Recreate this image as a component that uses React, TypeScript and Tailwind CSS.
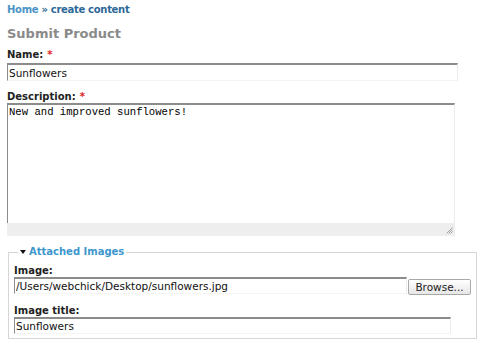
import { useState } from "react";

const inputCls =
  "block h-[17px] bg-white border-t-2 border-l border-r border-b border-t-[#8c8c8c] border-l-[#8c8c8c] border-r-[#ececec] border-b-[#f4f4f4] px-[1px] text-[10.5px] leading-[13px] text-[#111] outline-none font-['DejaVu_Sans',sans-serif]";

function Label({ text, required }: { text: string; required?: boolean }) {
  return (
    <div className="text-[10px] leading-[12px] font-bold text-[#222]">
      {text}
      {required && <span className="text-[#d22] ml-[4px]">*</span>}
    </div>
  );
}

export default function App() {
  const [name, setName] = useState("Sunflowers");
  const [desc, setDesc] = useState("New and improved sunflowers!");
  const [title, setTitle] = useState("Sunflowers");

  return (
    <div className="w-[480px] h-[343px] overflow-hidden bg-white pl-[7px] pt-[3px] font-['DejaVu_Sans',sans-serif]">
      <div className="text-[10px] leading-[14px] font-bold tracking-[-0.3px]">
        <a href="#" className="text-[#4b93c6]">
          Home
        </a>
        <span className="text-[#2c6898]"> » </span>
        <a href="#" className="text-[#2c6898]">
          create content
        </a>
      </div>

      <h2 className="mt-[9px] text-[13px] leading-[16px] font-bold text-[#8a8a8a]">
        Submit Product
      </h2>

      <div className="mt-[7px]">
        <Label text="Name:" required />
      </div>
      <input
        value={name}
        onChange={(e) => setName(e.target.value)}
        className={`${inputCls} mt-[2px] w-[451px] h-[18px]`}
      />

      <div className="mt-[10px]">
        <Label text="Description:" required />
      </div>
      <div className="w-[448px]">
        <textarea
          value={desc}
          onChange={(e) => setDesc(e.target.value)}
          className="block w-full h-[120px] resize-none bg-white border-t-2 border-l border-r border-t-[#8c8c8c] border-l-[#8c8c8c] border-r-[#ececec] px-[1px] pt-[1px] text-[10.6px] leading-[12px] text-[#000] outline-none font-['Liberation_Mono',monospace]"
        />
        <div className="h-[13px] bg-[#eeeeee] flex justify-end items-end pr-[2px] pb-[2px]">
          <svg width="7" height="7" viewBox="0 0 7 7">
            <path
              d="M6.5 0.5 L0.5 6.5 M6.5 2.5 L2.5 6.5 M6.5 4.5 L4.5 6.5"
              stroke="#9a9a9a"
              strokeWidth="0.9"
            />
          </svg>
        </div>
      </div>

      <fieldset className="mt-[10px] ml-[1px] w-[468px] border border-[#d6d6d6] px-[5px] pb-[4px]">
        <legend className="ml-[4px] px-[2px] text-[10px] leading-[12px] font-bold text-[#3d97cc] flex items-center">
          <span className="inline-block w-0 h-0 border-l-[3px] border-r-[3px] border-t-[4px] border-l-transparent border-r-transparent border-t-[#111] mr-[3px]" />
          <a href="#">Attached Images</a>
        </legend>

        <div className="mt-[7px] leading-[11px]">
          <Label text="Image:" />
        </div>
        <div className="flex items-start">
          <input
            value="/Users/webchick/Desktop/sunflowers.jpg"
            readOnly
            className={`${inputCls} w-[393px]`}
          />
          <button className="ml-[1px] mt-[2px] h-[16px] w-[63px] rounded-[2px] border border-[#a8a8a8] bg-gradient-to-b from-white to-[#e6e6e6] text-[10.5px] leading-[13px] text-[#222] font-['DejaVu_Sans',sans-serif]">
            Browse...
          </button>
        </div>

        <div className="mt-[10px]">
          <Label text="Image title:" />
        </div>
        <input
          value={title}
          onChange={(e) => setTitle(e.target.value)}
          className={`${inputCls} w-[437px]`}
        />
      </fieldset>
    </div>
  );
}
